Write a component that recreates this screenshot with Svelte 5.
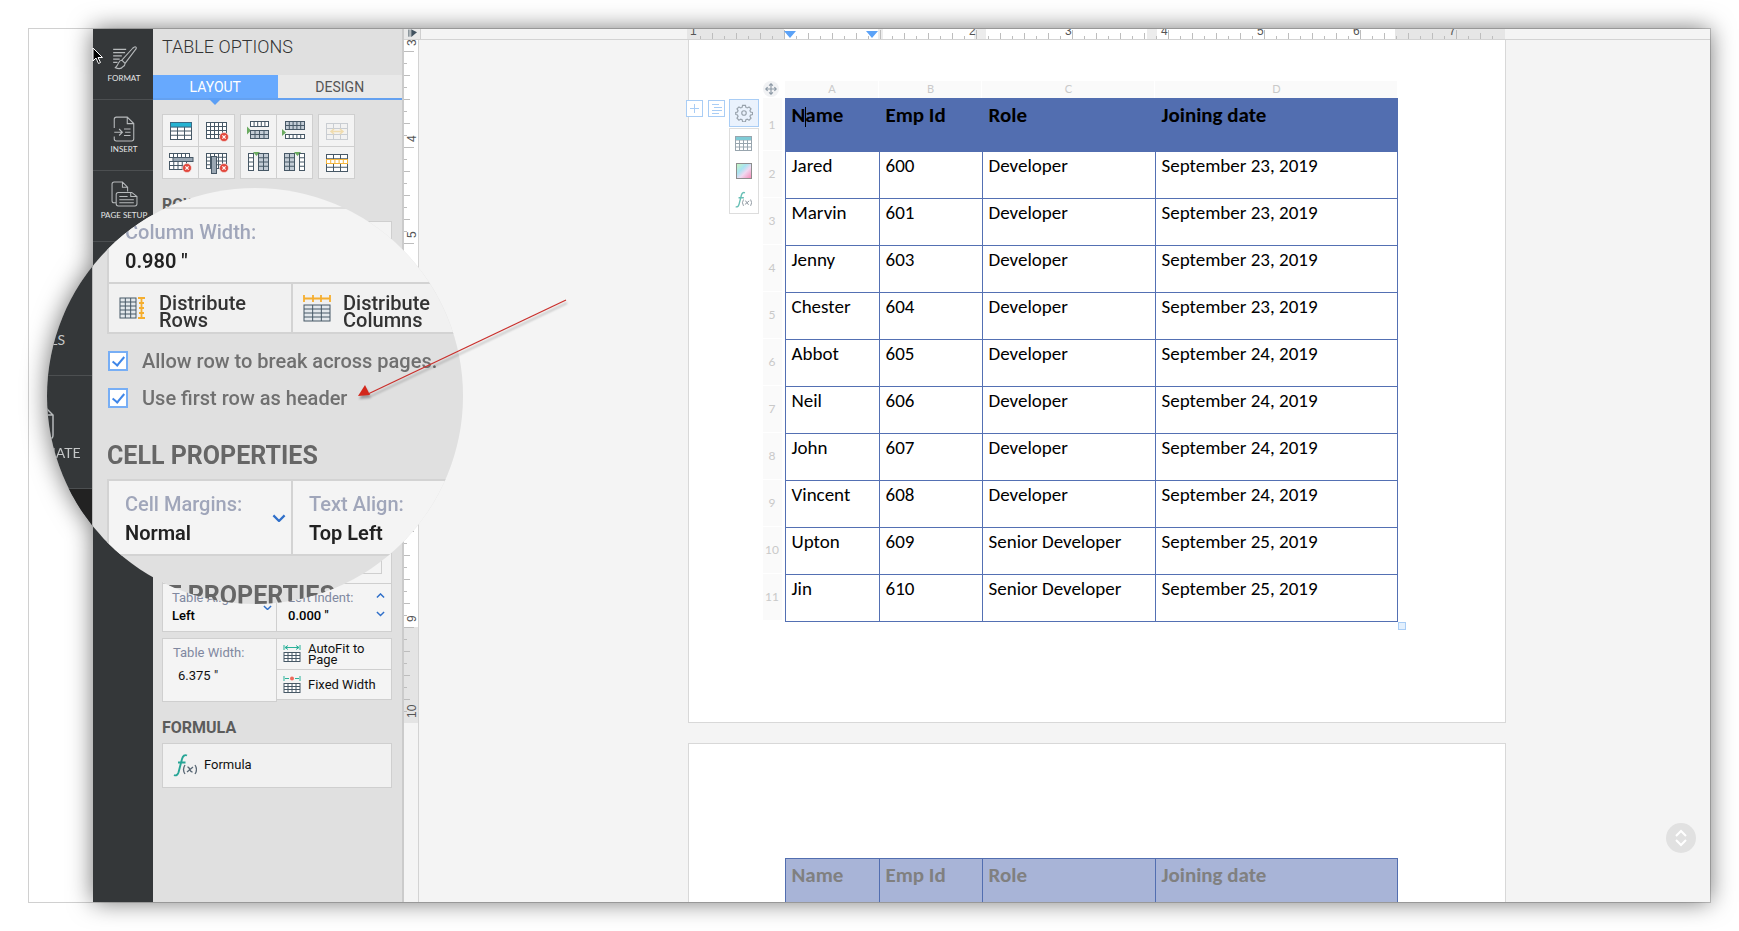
<script lang="ts">
  let tab = $state('LAYOUT');
  let breakRows = $state(true);
  let headerRow = $state(true);

  const columns = ['Name', 'Emp Id', 'Role', 'Joining date'];
  const letters = ['A', 'B', 'C', 'D'];

  const rows = [
    ['Jared', '600', 'Developer', 'September 23, 2019'],
    ['Marvin', '601', 'Developer', 'September 23, 2019'],
    ['Jenny', '603', 'Developer', 'September 23, 2019'],
    ['Chester', '604', 'Developer', 'September 23, 2019'],
    ['Abbot', '605', 'Developer', 'September 24, 2019'],
    ['Neil', '606', 'Developer', 'September 24, 2019'],
    ['John', '607', 'Developer', 'September 24, 2019'],
    ['Vincent', '608', 'Developer', 'September 24, 2019'],
    ['Upton', '609', 'Senior Developer', 'September 25, 2019'],
    ['Jin', '610', 'Senior Developer', 'September 25, 2019']
  ];

  const groups = [
    [['table', 'Insert table'], ['delTable', 'Delete table'], ['delRow', 'Delete row'], ['delCol', 'Delete column']],
    [['rowAbove', 'Insert row above'], ['rowBelow', 'Insert row below'], ['colLeft', 'Insert column left'], ['colRight', 'Insert column right']],
    [['merge', 'Merge cells'], ['split', 'Split cells']]
  ];

  // eighth-of-an-inch ticks
  const hTicks = Array.from({ length: 67 }, (_, i) => i + 1);
  const vTicks = Array.from({ length: 57 }, (_, i) => i);
</script>

{#snippet grid(x, y, w, h, cols, lines, color = '#475866', fill = '#fff')}
  <rect {x} {y} width={w} height={h} {fill} stroke={color} />
  {#each Array(cols - 1) as _, i}
    <path d="M{x + ((i + 1) * w) / cols} {y}v{h}" stroke={color} />
  {/each}
  {#each Array(lines - 1) as _, i}
    <path d="M{x} {y + ((i + 1) * h) / lines}h{w}" stroke={color} />
  {/each}
{/snippet}

{#snippet cross(x, y)}
  <circle cx={x} cy={y} r="4.5" fill="#e2483d" stroke="#f4f4f4" stroke-width=".6" />
  <path d="M{x - 1.6} {y - 1.6}l3.2 3.2m0 -3.2l-3.2 3.2" stroke="#fff" stroke-width="1.2" />
{/snippet}

{#snippet tableIcon(name)}
  <svg viewBox="0 0 30 26" width="30" height="26" fill="none">
    {#if name == 'table'}
      {@render grid(4.5, 4.5, 21, 17, 3, 4)}
      <rect x="4.5" y="4.5" width="21" height="4.5" fill="#25b3d2" stroke="#3b6c86" />
    {:else if name == 'delTable'}
      {@render grid(4.5, 4.5, 20, 16, 5, 4)}
      {@render cross(22, 19)}
    {:else if name == 'delRow'}
      {@render grid(3.5, 3.5, 20, 4, 5, 1)}
      {@render grid(3.5, 11.5, 17, 8, 4, 2)}
      <rect x="7" y="7.5" width="20" height="4" fill="#9aa7b3" stroke="#475866" />
      {@render cross(21, 18)}
    {:else if name == 'delCol'}
      {@render grid(4.5, 3.5, 20, 15, 5, 4)}
      <rect x="9.5" y="6.5" width="5" height="17" fill="#9aa7b3" stroke="#475866" />
      {@render cross(22, 18)}
    {:else if name == 'rowAbove'}
      <path d="M3 8.5V16.5L7 12.5Z" fill="#6bab60" />
      {@render grid(6.5, 3.5, 18, 5, 5, 1)}
      {@render grid(6.5, 12.5, 18, 8, 4, 2, '#475866', '#c3ccd5')}
    {:else if name == 'rowBelow'}
      <path d="M2 11V18L6 14.5Z" fill="#6bab60" />
      {@render grid(5.5, 3.5, 19, 8, 5, 2, '#475866', '#c3ccd5')}
      {@render grid(5.5, 16.5, 19, 4, 5, 1)}
    {:else if name == 'colLeft'}
      <path d="M9 2h7l-3.5 4Z" fill="#6bab60" />
      {@render grid(4.5, 3.5, 5, 17, 1, 4)}
      {@render grid(14.5, 3.5, 10, 17, 2, 4, '#475866', '#c3ccd5')}
    {:else if name == 'colRight'}
      <path d="M14 2h7l-3.5 4Z" fill="#6bab60" />
      {@render grid(4.5, 3.5, 10, 17, 2, 4, '#475866', '#c3ccd5')}
      {@render grid(19.5, 3.5, 5, 17, 1, 4)}
    {:else if name == 'merge'}
      {@render grid(4.5, 5.5, 21, 16, 3, 3, '#c9cdd2', '#f2f2f2')}
      <rect x="4.5" y="10.5" width="21" height="6" fill="#f4f2ee" stroke="#c9cdd2" />
      <path d="M9 13.5h12M12 11l-3 2.5 3 2.5M18 11l3 2.5-3 2.5" stroke="#f0dcae" stroke-width="1.5" />
    {:else if name == 'split'}
      {@render grid(4.5, 4.5, 21, 17, 3, 4)}
      {@render grid(4.5, 9.5, 21, 4, 5, 1, '#f5b63d', '#fff')}
    {/if}
  </svg>
{/snippet}

{#snippet chevron(up = false, size = 9)}
  <svg class="chevron" viewBox="0 0 10 6" width={size} height={size * 0.6} fill="none">
    <path d={up ? 'M1 5l4-4 4 4' : 'M1 1l4 4 4-4'} stroke="#2f6fc9" stroke-width="1.6" />
  </svg>
{/snippet}

{#snippet fx(size)}
  <svg viewBox="0 0 24 24" width={size} height={size} fill="none">
    <path d="M1 22q3 1.500 4.500-2.500L9 6q1.500-5 5-3.500M5 9.500h7.500" stroke="#27a596" stroke-width="1.900" />
    <path d="M12 12q-3 4.500 0 9M22 12q3 4.500 0 9M14.500 14q1.500 0 2.300 2.500t2.700 2.500M20 14l-6 5" stroke="#5a6875" stroke-width="1.300" />
  </svg>
{/snippet}

<div class="stage">
  <div class="frame">
    <div class="shot">
      <div class="window">
        <nav class="rail">
          <button class="rail-item">
            <svg viewBox="0 0 24 24" width="26" height="26" fill="none" stroke="#b7babc">
              <path d="M2 4h12M2 7h11M2 10h8M2 13h6M2 16h4M10 14L20 3q2-2 3-1t-1 3L13 17ZM10 14q-2 0-3 2.500T4 21q5 2 7-1 2-1 2-3M10 14l3 3" />
            </svg>
            FORMAT
          </button>
          <button class="rail-item">
            <svg viewBox="0 0 24 24" width="26" height="26" fill="none" stroke="#b7babc">
              <path d="M3 11V3q0-2 2-2h10l6 6v14q0 2-2 2H5q-2 0-2-2v-2M15 1v6h6M3 15h7M7.500 12l3 3-3 3M12 12h6M13 15h5M12 18h6" />
            </svg>
            INSERT
          </button>
          <button class="rail-item setup">
            <svg viewBox="0 0 26 26" width="27" height="27" fill="none" stroke="#b7babc">
              <path d="M5 21H3q-2 0-2-2V3q0-2 2-2h8l5 5v4M11 1v5h5M7 11h13l5 4v7q0 2-2 2H7q-2 0-2-2v-9q0-2 2-2ZM19 11v4h6M8 15h8M8 18h14M8 21h14" />
            </svg>
            PAGE SETUP
          </button>
        </nav>

        <aside class="panel">
          <h2>TABLE OPTIONS</h2>
          <div class="tabs">
            {#each ['LAYOUT', 'DESIGN'] as name}
              <button class:active={tab == name} onclick={() => (tab = name)}>{name}</button>
            {/each}
          </div>
          <div class="panel-body">
            <div class="icon-groups">
              {#each groups as group}
                <div class="icon-group" class:single={group.length == 2}>
                  {#each group as [name, label]}
                    <button aria-label={label}>{@render tableIcon(name)}</button>
                  {/each}
                </div>
              {/each}
            </div>

            <h3>ROW PROPERTIES</h3>
            <div class="box tall">
              <span class="swatch"></span>
            </div>
            <div class="box fields">
              <div class="field">
                <label for="table-align">Table Align:</label>
                <select id="table-align"><option>Left</option></select>
                {@render chevron()}
              </div>
              <div class="field">
                <label for="left-indent">Left Indent:</label>
                <input id="left-indent" value={'0.000 "'} />
                <span class="spin">{@render chevron(true)}{@render chevron()}</span>
              </div>
            </div>
            <div class="sizing">
              <div class="box width-field">
                <label for="table-width">Table Width:</label>
                <input id="table-width" value={'6.375 "'} />
              </div>
              <div class="box fit">
                <button>
                  <svg viewBox="0 0 18 18" width="18" height="18" fill="none">
                    <path d="M1 0v5M17 0v5M2 2.500h14M5 .5l-3 2 3 2M13 .5l3 2-3 2" stroke="#2bb199" />
                    {@render grid(1, 7.5, 16, 9, 4, 3)}
                  </svg>
                  <span>AutoFit to Page</span>
                </button>
                <button>
                  <svg viewBox="0 0 18 18" width="18" height="18" fill="none">
                    <path d="M1 0v5M17 0v5M2 2.500h4M12 2.500h4" stroke="#2bb199" />
                    <circle cx="9" cy="2.5" r="2" fill="#ee6a5b" />
                    {@render grid(1, 7.5, 16, 9, 4, 3)}
                  </svg>
                  <span>Fixed Width</span>
                </button>
              </div>
            </div>

            <h3 class="formula-title">FORMULA</h3>
            <button class="box formula">{@render fx(24)} Formula</button>
          </div>
        </aside>

        <main class="editor">
          <div class="ruler-row">
            <div class="corner">
              <svg viewBox="0 0 10 10" width="9" height="10"><path d="M1 0v8M3.500 0v8" stroke="#41525f" /><path d="M4 0l6 3-6 5Z" fill="#41525f" /></svg>
            </div>
            <div class="track">
              <svg class="h-ruler" viewBox="0 0 818 10" width="818" height="10">
                <rect width="818" height="10" fill="#fff" />
                <rect width="97" height="10" fill="#e6e6e6" />
                <rect x="191" width="5" height="10" fill="#ececec" />
                <rect x="287" width="12" height="10" fill="#ececec" />
                <rect x="460" width="10" height="10" fill="#ececec" />
                <rect x="708" width="110" height="10" fill="#e6e6e6" />
                {#each hTicks as i}
                  <path d="M{i * 12 + 1.5} {i % 8 == 0 ? 1 : i % 2 ? 7 : 4}V10" stroke="#bdbdbd" />
                {/each}
                <text x="3" y="6">1</text>
                {#each [2, 3, 4, 5, 6, 7] as n}
                  <text x={n * 96 + 90} y="6">{n}</text>
                {/each}
                <path d="M97 2h12l-6 7ZM179 2h12l-6 7Z" fill="#5ba2f7" />
              </svg>
            </div>
          </div>

          <div class="canvas">
            <div class="v-ruler">
              <svg viewBox="0 0 14 683" width="14" height="683">
                <rect width="14" height="587" fill="#fff" />
                <rect y="587" width="14" height="96" fill="#e4e4e4" />
                {#each vTicks as i}
                  <path d="M0 {i * 12 + 11.5}h{i % 8 == 0 ? 10 : i % 2 ? 3 : 6}" stroke="#bdbdbd" />
                {/each}
                {#each [3, 4, 5, 6, 7, 8, 9, 10] as n}
                  <text transform="translate(12 {(n - 3) * 96 + 6}) rotate(-90)">{n}</text>
                {/each}
              </svg>
            </div>

            <div class="pages">
              <section class="page first">
                <div class="tools">
                  <button class="mini" aria-label="Add">
                    <svg viewBox="0 0 17 17" width="17" height="17" fill="none" stroke="#a9cdf5">
                      <rect x=".5" y=".5" width="16" height="16" /><path d="M8.500 4v9M4 8.500h9" />
                    </svg>
                  </button>
                  <button class="mini" aria-label="Paragraph">
                    <svg viewBox="0 0 17 17" width="17" height="17" fill="none" stroke="#a9cdf5">
                      <rect x=".5" y=".5" width="16" height="16" /><path d="M4 4.500h7M6 7.500h8M4 10.500h10M4 13.500h7" />
                    </svg>
                  </button>
                  <div class="stack">
                    <button class="gear" aria-label="Table settings">
                      <svg viewBox="0 0 20 20" width="18" height="18" fill="none" stroke="#98a2ac" stroke-width="1.3">
                        <circle cx="10" cy="10" r="2.500" />
                        <path d="M8.400 1.500h3.200l.5 2.300 1.500.6 2-1.200 2.200 2.200-1.200 2 .6 1.500 2.300.5v2.200l-2.300.7-.6 1.500 1.200 2-2.200 2.200-2-1.200-1.500.6-.5 2.300H8.400l-.5-2.300-1.500-.6-2 1.200-2.200-2.200 1.200-2-.6-1.500-2-.7V9.400l2-.5.6-1.500-1.200-2 2.200-2.200 2 1.200 1.500-.6Z" />
                      </svg>
                    </button>
                    <div class="stack-menu">
                      <button aria-label="Table style">
                        <svg viewBox="0 0 17 15" width="17" height="15">
                          {@render grid(0.5, 0.5, 16, 14, 4, 4, '#98a5ae')}
                          <path d="M1 1h15v3H1Z" fill="#7fcbd6" />
                        </svg>
                      </button>
                      <button aria-label="Fill colour"><span class="colors"></span></button>
                      <button class="fx" aria-label="Formula">{@render fx(17)}</button>
                    </div>
                  </div>
                </div>

                <div class="row-numbers">
                  <button class="move" aria-label="Move table">
                    <svg viewBox="0 0 16 16" width="12" height="12" fill="none" stroke="#8d99a5" stroke-width="1.5">
                      <path d="M8 1v14M1 8h14M5.500 3.500L8 1l2.500 2.500M5.500 12.500L8 15l2.500-2.500M3.500 5.500L1 8l2.500 2.500M12.500 5.500L15 8l-2.500 2.500" />
                    </svg>
                  </button>
                  <span class="head">1</span>
                  {#each rows as _, i}
                    <span>{i + 2}</span>
                  {/each}
                </div>

                <div class="sheet">
                  <div class="letters">
                    {#each letters as letter}<span>{letter}</span>{/each}
                  </div>
                  <table>
                    <thead>
                      <tr>
                        {#each columns as col, i}
                          <th>{#if i == 0}N<i class="caret"></i>ame{:else}{col}{/if}</th>
                        {/each}
                      </tr>
                    </thead>
                    <tbody>
                      {#each rows as row}
                        <tr>
                          {#each row as cell}<td>{cell}</td>{/each}
                        </tr>
                      {/each}
                    </tbody>
                  </table>
                  <span class="resize"></span>
                </div>
              </section>

              <section class="page second">
                <table class="repeat">
                  <thead>
                    <tr>
                      {#each columns as col}<th>{col}</th>{/each}
                    </tr>
                  </thead>
                </table>
              </section>
            </div>
          </div>

          <button class="scroller" aria-label="Scroll pages">
            <svg viewBox="0 0 14 18" width="14" height="18" fill="none" stroke="#fff" stroke-width="2">
              <path d="M2 7l5-5 5 5M2 11l5 5 5-5" />
            </svg>
          </button>
        </main>
      </div>

      <!-- magnified part of the panel -->
      <div class="lens">
        <div class="lens-rail">
          <div class="lens-item tools-item">TOOLS</div>
          <div class="lens-item">
            <svg viewBox="0 0 30 36" width="30" height="36" fill="none" stroke="#b7babc" stroke-width="1.5">
              <path d="M1 1h14l10 10v20q0 4-4 4H1M15 1v10h10M6 16h14M6 21h14M6 26h14" />
            </svg>
            AUTOMATE
          </div>
          <div class="lens-item current"></div>
        </div>
        <div class="lens-panel">
          <div class="lens-box">
            <div class="lens-gap"></div>
            <div class="lens-field">
              <label for="column-width">Column Width:</label>
              <input id="column-width" value={'0.980 "'} />
            </div>
            <div class="lens-buttons">
              <button>
                <svg viewBox="0 0 28 24" width="28" height="24" fill="none">
                  {@render grid(1, 2, 16, 20, 3, 5, '#475866', '#e3e8ec')}
                  <path d="M19 2h7M19 22h7M22.500 2v20M20 7h5M20 12h5M20 17h5" stroke="#f5ae2f" stroke-width="1.8" />
                </svg>
                <span>Distribute Rows</span>
              </button>
              <button>
                <svg viewBox="0 0 28 28" width="28" height="28" fill="none">
                  <path d="M1 1v7M10 1v7M18 1v7M27 1v7M1 4.500h26" stroke="#f5ae2f" stroke-width="1.8" />
                  {@render grid(1, 11, 26, 16, 3, 4, '#475866', '#e3e8ec')}
                </svg>
                <span>Distribute Columns</span>
              </button>
            </div>
          </div>
          <div class="checks">
            <label><input type="checkbox" bind:checked={breakRows} /> Allow row to break across pages.</label>
            <label><input type="checkbox" bind:checked={headerRow} /> Use first row as header</label>
          </div>
          <h3>CELL PROPERTIES</h3>
          <div class="lens-box cells">
            <div class="lens-field">
              <label for="cell-margins">Cell Margins:</label>
              <select id="cell-margins"><option>Normal</option></select>
              {@render chevron(false, 14)}
            </div>
            <div class="lens-field">
              <label for="text-align">Text Align:</label>
              <select id="text-align"><option>Top Left</option></select>
            </div>
          </div>
          <h3 class="cut">TABLE PROPERTIES</h3>
        </div>
      </div>

      <svg class="arrow" viewBox="0 0 210 104" width="210" height="104" fill="none">
        <path d="M208 3L10 97" stroke="#c9302c" stroke-width="1.3" />
        <path d="M0 99L7 88L12 98Z" fill="#d3281c" />
      </svg>
      <svg class="cursor" viewBox="0 0 12 18" width="12" height="18">
        <path d="M1 1v13l3-3 2.500 5.500 2-1L6 10.500h4.500Z" fill="#000" stroke="#fff" />
      </svg>
    </div>
  </div>
</div>

<style>
  :global(body) {
    margin: 0;
    background: #fff;
  }

  .stage {
    box-sizing: border-box;
    height: 100vh;
    padding: 28px;
    overflow: hidden;
    font-family: Roboto, 'Liberation Sans', sans-serif;
  }
  .stage * {
    box-sizing: border-box;
  }
  button, input, select {
    font: inherit;
    color: inherit;
    background: none;
    border: 0;
    border-radius: 0;
    margin: 0;
    padding: 0;
    appearance: none;
    text-align: left;
  }
  button {
    cursor: pointer;
  }
  svg {
    display: block;
    flex: none;
  }

  .frame {
    height: 100%;
    border: 1px solid #d0d0d0;
    padding-left: 64px;
  }
  .shot {
    position: relative;
    height: 100%;
    filter: drop-shadow(0 0 12px rgba(0, 0, 0, 0.55));
  }
  .window {
    display: flex;
    height: 100%;
    overflow: hidden;
    background: #f4f4f4;
  }

  /* left rail */
  .rail {
    width: 60px;
    flex: none;
    background: #343739;
  }
  .rail-item {
    display: flex;
    flex-direction: column;
    align-items: center;
    justify-content: flex-end;
    gap: 2px;
    width: 60px;
    height: 71px;
    padding: 0 0 16px 2px;
    border-bottom: 1px solid #4c4f51;
    font: 8px/10px Lato, sans-serif;
    color: #e4e6e7;
    white-space: nowrap;
  }
  .setup {
    padding-bottom: 21px;
  }

  /* options panel */
  .panel {
    width: 251px;
    flex: none;
    background: #e0e0e0;
    border-right: 2px solid #cbcbcb;
    font-size: 13px;
    color: #111;
  }
  h2 {
    margin: 0;
    padding: 8px 9px 18px;
    font: 300 18px/20px Roboto, sans-serif;
    color: #333;
  }
  .tabs {
    display: flex;
    border-bottom: 2px solid #64a1f0;
  }
  .tabs button {
    position: relative;
    flex: 1;
    height: 23px;
    text-align: center;
    font-size: 14px;
    color: #555;
    background: #e9e9e9;
  }
  .tabs .active {
    background: #67a9fe;
    color: #fff;
  }
  .tabs .active::after {
    content: '';
    position: absolute;
    left: 50%;
    top: 100%;
    margin-left: -7px;
    border: 7px solid transparent;
    border-top-color: #5c9ff5;
    border-bottom: 0;
  }
  .panel-body {
    padding: 14px 10px 0 9px;
  }
  .icon-groups {
    display: flex;
    gap: 5px;
  }
  .icon-group {
    display: grid;
    grid-template-columns: 36px 36px;
    border: solid #cfcfcf;
    border-width: 1px 0 0 1px;
  }
  .icon-group.single {
    grid-template-columns: 36px;
  }
  .icon-group button {
    display: flex;
    justify-content: center;
    align-items: center;
    height: 32px;
    background: #f3f3f3;
    border: solid #cfcfcf;
    border-width: 0 1px 1px 0;
  }
  h3 {
    margin: 16px 0 6px;
    font: bold 16px/20px Roboto, sans-serif;
    color: #5c5c5c;
  }
  .box {
    background: #f4f4f4;
    border: 1px solid #cfcfcf;
  }
  .tall {
    display: flex;
    justify-content: flex-end;
    align-items: flex-end;
    height: 363px;
    padding: 9px;
  }
  .swatch {
    width: 30px;
    height: 22px;
    border: 1px solid #cfcfcf;
  }
  .fields {
    display: flex;
    height: 48px;
    border-top: 0;
  }
  .field {
    position: relative;
    width: 50%;
    padding: 5px 9px 0;
    border-right: 1px solid #cfcfcf;
  }
  .field:last-child {
    padding-left: 11px;
    border: 0;
  }
  .field label, .width-field label {
    display: block;
    line-height: 18px;
    color: #8088a0;
  }
  .field select, .field input {
    display: block;
    width: 70px;
    line-height: 17px;
    height: 17px;
    font-weight: 500;
    color: #000;
  }
  .field > :global(.chevron) {
    position: absolute;
    right: 4px;
    top: 21px;
  }
  .spin {
    position: absolute;
    right: 6px;
    top: 9px;
    display: grid;
    gap: 13px;
  }
  .sizing {
    display: flex;
    align-items: flex-start;
    margin-top: 6px;
  }
  .width-field {
    width: 50%;
    height: 64px;
    padding: 5px 10px 0;
  }
  .width-field input {
    display: block;
    width: 80px;
    margin-top: 5px;
    padding-left: 5px;
    line-height: 18px;
    height: 18px;
  }
  .fit {
    width: 50%;
    border-left: 0;
  }
  .fit button {
    display: flex;
    align-items: center;
    gap: 7px;
    width: 100%;
    height: 30px;
    padding: 0 6px;
    line-height: 11px;
  }
  .fit button + button {
    border-top: 1px solid #cfcfcf;
  }
  h3.formula-title {
    margin: 16px 0 5px;
  }
  .formula {
    display: flex;
    align-items: center;
    gap: 7px;
    width: 100%;
    height: 45px;
    padding: 0 10px 2px;
    background: #f1f1f1;
  }

  /* editor */
  .editor {
    position: relative;
    display: flex;
    flex-direction: column;
    flex: 1;
    min-width: 0;
  }
  .ruler-row {
    display: flex;
    flex: none;
    height: 11px;
    border-bottom: 1px solid #d3d3d3;
  }
  .corner {
    width: 17px;
    padding-left: 4px;
    background: #e9e9e9;
    border-right: 1px solid #cfcfcf;
  }
  .track {
    display: flex;
    flex: 1;
    justify-content: center;
    padding-left: 61px;
  }
  .editor text {
    font: 12px 'Liberation Sans', sans-serif;
    fill: #555;
  }
  .canvas {
    display: flex;
    flex: 1;
    min-height: 0;
    overflow: hidden;
  }
  .v-ruler {
    width: 15px;
    flex: none;
    border-right: 1px solid #d3d3d3;
  }
  .pages {
    display: flex;
    flex-direction: column;
    align-items: center;
    gap: 20px;
    flex: 1;
    padding-left: 64px;
  }
  .page {
    flex: none;
    width: 818px;
    background: #fff;
    border: 1px solid #d8d8d8;
  }
  .first {
    display: flex;
    align-items: flex-start;
    padding: 41px 0 100px;
    height: 683px;
    border-top: 0;
  }
  .second {
    padding: 114px 0 96px 96px;
  }

  .tools {
    display: flex;
    gap: 5px;
    width: 77px;
    flex: none;
    margin-left: -3px;
    padding-top: 19px;
  }
  .mini {
    width: 17px;
    height: 17px;
    background: #fff;
  }
  .stack {
    display: grid;
    gap: 1px;
    width: 30px;
    margin: -1px 0 0 -1px;
    align-content: start;
  }
  .stack button {
    display: flex;
    align-items: center;
    justify-content: center;
    height: 28px;
  }
  .gear {
    background: #eaf2fd;
    border: 1px solid #a9cdf5;
  }
  .stack-menu {
    border: 1px solid #ddd;
    background: #fff;
  }
  .stack-menu button {
    width: 28px;
  }
  .fx {
    opacity: 0.7;
  }
  .colors {
    width: 16px;
    height: 16px;
    border: 1px solid #8d8d8d;
    background: linear-gradient(135deg, #c5f5c0, #a9e4f2 35%, #f0d9f0 60%, #f58bb8);
  }

  .row-numbers {
    display: flex;
    flex-direction: column;
    width: 22px;
    flex: none;
    padding-right: 3px;
  }
  .move {
    display: flex;
    align-items: center;
    justify-content: center;
    width: 16px;
    height: 16px;
    margin-bottom: 1px;
    border-radius: 50%;
    background: #f1f2f4;
  }
  .row-numbers span {
    height: 47px;
    background: #fafafa;
    border-bottom: 1px solid #fff;
    text-align: center;
    font: 12px/46px Lato, sans-serif;
    color: #c9c9c9;
  }
  .row-numbers .head {
    height: 53px;
    line-height: 53px;
  }

  .sheet {
    position: relative;
    width: 613px;
  }
  .letters {
    display: grid;
    grid-template-columns: 94px 103px 173px 243px;
    height: 17px;
  }
  .letters span {
    background: #fafafa;
    border-right: 1px solid #fff;
    padding-left: 2px;
    text-align: center;
    font: 11px/15px Lato, sans-serif;
    color: #c9c9c9;
  }
  table {
    width: 613px;
    border-collapse: collapse;
    table-layout: fixed;
    font-family: Carlito, Lato, sans-serif;
    color: #000;
  }
  th, td {
    padding: 4px 6px 0;
    border: 1px solid #5470b3;
    text-align: left;
    vertical-align: top;
  }
  th {
    height: 53px;
    background: #526eb0;
    font-size: 21px;
    line-height: 24px;
    border-color: #526eb0;
  }
  td {
    height: 47px;
    font-size: 19px;
    line-height: 20px;
  }
  th:nth-child(1) {
    width: 94px;
  }
  th:nth-child(2) {
    width: 103px;
  }
  th:nth-child(3) {
    width: 173px;
  }
  .repeat th {
    background: #a8b4d7;
    color: #808080;
  }
  .caret {
    display: inline-block;
    width: 1px;
    height: 20px;
    margin-right: -1px;
    vertical-align: -5px;
    background: #000;
  }
  .resize {
    position: absolute;
    left: 100%;
    top: 100%;
    width: 8px;
    height: 8px;
    background: #e3f0fd;
    border: 1px solid #a9cdf5;
  }
  .scroller {
    position: absolute;
    right: 14px;
    bottom: 49px;
    display: flex;
    align-items: center;
    justify-content: center;
    width: 30px;
    height: 30px;
    border-radius: 50%;
    background: #e1e1e1;
  }

  /* lens */
  .lens {
    position: absolute;
    left: -46px;
    top: 159px;
    display: flex;
    width: 416px;
    height: 416px;
    overflow: hidden;
    border-radius: 50%;
    background: #e0e0e0;
  }
  .lens-rail {
    width: 100px;
    flex: none;
    margin-left: -54px;
    background: #343739;
    border-right: 1px solid #bbb;
  }
  .lens-item {
    display: flex;
    flex-direction: column;
    align-items: center;
    justify-content: flex-end;
    gap: 4px;
    height: 113px;
    padding-bottom: 26px;
    border-bottom: 1px solid #4c4f51;
    font: 14px/18px Lato, sans-serif;
    color: #c5c7c8;
  }
  .tools-item {
    height: 188px;
  }
  .current {
    background: #222;
  }
  .lens-panel {
    flex: 1;
    padding-left: 14px;
    white-space: nowrap;
  }
  .lens-box {
    width: 368px;
    background: #f4f4f4;
    border: 2px solid #d3d3d3;
    border-top: 0;
  }
  .lens-gap {
    height: 21px;
    border-bottom: 2px solid #dedede;
  }
  .lens-field {
    position: relative;
    height: 73px;
    padding: 9px 16px 0;
  }
  .lens-field label {
    display: block;
    font-size: 20px;
    font-weight: 500;
    line-height: 28px;
    color: #a0a6ba;
  }
  .lens-field input, .lens-field select {
    display: block;
    width: 110px;
    height: 30px;
    line-height: 30px;
    font-size: 20px;
    font-weight: 600;
    color: #222;
  }
  .lens-field > :global(.chevron) {
    position: absolute;
    right: 5px;
    top: 33px;
  }
  .lens-buttons {
    display: flex;
    border-top: 2px solid #d3d3d3;
  }
  .lens-buttons button {
    display: flex;
    align-items: center;
    gap: 12px;
    width: 50%;
    height: 48px;
    padding-left: 10px;
    font-size: 20px;
    font-weight: 500;
    line-height: 17px;
    color: #333;
    background: #f1f1f1;
  }
  .lens-buttons span {
    width: 100px;
    padding-top: 8px;
    white-space: normal;
  }
  .lens-buttons button + button {
    border-left: 2px solid #d3d3d3;
  }
  .checks {
    display: grid;
    gap: 9px;
    padding: 13px 0 0 1px;
  }
  .checks label {
    display: flex;
    align-items: center;
    gap: 14px;
    font-size: 20px;
    font-weight: 500;
    line-height: 28px;
    color: #707070;
  }
  .checks input {
    width: 20px;
    height: 20px;
    background: #fff;
    border: 2px solid #77aef5;
  }
  .checks input:checked::after {
    content: '';
    display: block;
    width: 5px;
    height: 10px;
    margin: 1px 0 0 5px;
    border: solid #3f86e8;
    border-width: 0 2px 2px 0;
    transform: rotate(40deg);
  }
  .lens-panel h3 {
    margin: 30px 0 9px;
    font-size: 25px;
    line-height: 28px;
    color: #666;
  }
  .lens-box.cells {
    display: flex;
    height: 77px;
    border-top: 2px solid #d3d3d3;
  }
  .cells .lens-field {
    width: 50%;
  }
  .cells .lens-field + .lens-field {
    border-left: 2px solid #d3d3d3;
  }
  .lens-panel h3.cut {
    margin: 26px 0 0;
  }

  .arrow {
    position: absolute;
    left: 265px;
    top: 268px;
    filter: drop-shadow(1px 3px 1px rgba(0, 0, 0, 0.3));
  }
  .cursor {
    position: absolute;
    left: -1px;
    top: 18px;
  }
</style>
